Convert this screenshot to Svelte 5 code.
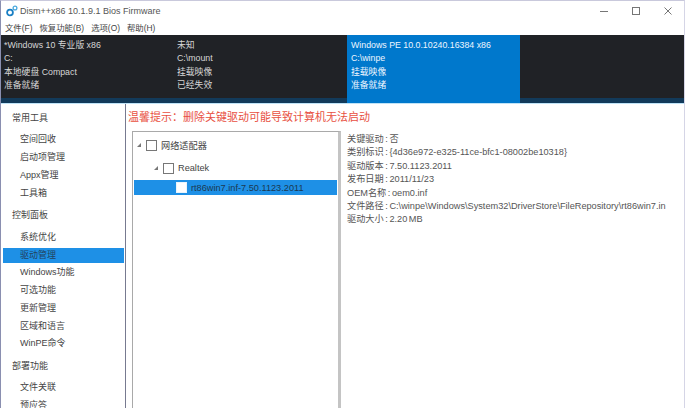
<script lang="ts">
  const menus = ["文件(F)", "恢复功能(B)", "选项(O)", "帮助(H)"];
  const sessions = [
    { lines: ["*Windows 10 专业版 x86", "C:", "本地硬盘 Compact", "准备就绪"], width: 173 },
    { lines: ["未知", "C:\\mount", "挂载映像", "已经失效"], width: 173 },
    { lines: ["Windows PE 10.0.10240.16384 x86", "C:\\winpe", "挂载映像", "准备就绪"], width: 173, active: true },
  ];
  const nav = [
    { title: "常用工具", items: ["空间回收", "启动项管理", "Appx管理", "工具箱"] },
    { title: "控制面板", items: ["系统优化", "驱动管理", "Windows功能", "可选功能", "更新管理", "区域和语言", "WinPE命令"] },
    { title: "部署功能", items: ["文件关联", "预应答"] },
  ];
  const details = [
    "关键驱动 : 否",
    "类别标识 : {4d36e972-e325-11ce-bfc1-08002be10318}",
    "驱动版本 : 7.50.1123.2011",
    "发布日期 : 2011/11/23",
    "OEM名称 : oem0.inf",
    "文件路径 : C:\\winpe\\Windows\\System32\\DriverStore\\FileRepository\\rt86win7.in",
    "驱动大小 : 2.20 MB",
  ];
</script>

<div class="window">
  <header class="titlebar">
    <svg class="logo" width="12" height="12" viewBox="0 0 12 12">
      <circle cx="4" cy="7.5" r="2.9" fill="none" stroke="#1a7fc4" stroke-width="1.8" />
      <circle cx="9" cy="3" r="1.9" fill="none" stroke="#4aa8dc" stroke-width="1.3" />
    </svg>
    <span class="title">Dism++x86 10.1.9.1 Bios Firmware</span>
    <div class="controls">
      <svg width="8" height="8" viewBox="0 0 8 8"><path d="M0 4.5h8" stroke="#555" /></svg>
      <svg width="8" height="8" viewBox="0 0 8 8"><rect x=".5" y=".5" width="7" height="7" fill="none" stroke="#555" /></svg>
      <svg width="8" height="8" viewBox="0 0 8 8"><path d="M.5.5l7 7M7.5.5l-7 7" stroke="#555" /></svg>
    </div>
  </header>

  <nav class="menubar">
    {#each menus as menu}
      <span>{menu}</span>
    {/each}
  </nav>

  <section class="sessions">
    {#each sessions as session}
      <div class="session" class:active={session.active} style="width: {session.width}px">
        {#each session.lines as line}
          <div>{line}</div>
        {/each}
      </div>
    {/each}
  </section>

  <main class="content">
    <aside class="sidebar">
      {#each nav as group}
        <h3>{group.title}</h3>
        {#each group.items as item}
          <div class="nav-item" class:selected={item === "驱动管理"}>{item}</div>
        {/each}
      {/each}
    </aside>

    <section class="panel">
      <p class="warning">温馨提示：删除关键驱动可能导致计算机无法启动</p>
      <div class="columns">
        <div class="tree">
          <div class="node level-0">
            <span class="arrow"></span><span class="check"></span><span>网络适配器</span>
          </div>
          <div class="node level-1">
            <span class="arrow"></span><span class="check"></span><span>Realtek</span>
          </div>
          <div class="node level-2 selected">
            <span class="check filled"></span><span>rt86win7.inf-7.50.1123.2011</span>
          </div>
        </div>
        <div class="details">
          {#each details as line}
            <div>{line}</div>
          {/each}
        </div>
      </div>
    </section>
  </main>
</div>

<style>
  :global(body) {
    margin: 0;
    overflow: hidden;
  }

  .window {
    width: 685px;
    height: 408px;
    overflow: hidden;
    display: flex;
    flex-direction: column;
    background: #fff;
    color: #333;
    font-family: "Liberation Sans", "Noto Sans CJK SC", sans-serif;
    font-size: 9px;
    box-sizing: border-box;
    border-left: 1px solid #8a8fb0;
    border-right: 1px solid #d5d5e6;
    border-top: 1px solid #c9c9dc;
  }

  .titlebar {
    height: 20px;
    display: flex;
    align-items: center;
    padding-left: 5px;
    gap: 2px;
    color: #555;
    flex: none;
  }

  .title {
    font-family: "Liberation Sans", sans-serif;
    font-size: 9px;
  }

  .controls {
    margin-left: auto;
    display: flex;
    gap: 24px;
    padding-right: 12px;
    opacity: 0.8;
  }

  .menubar {
    height: 14px;
    padding: 0 0 2px 4px;
    box-sizing: border-box;
    display: flex;
    align-items: center;
    gap: 7px;
    color: #444;
    font-size: 8.4px;
    flex: none;
  }

  .sessions {
    height: 68px;
    background: linear-gradient(#202226 0 63px, #123a5a 63px);
    display: flex;
    flex: none;
  }

  .session {
    color: #d6d6d6;
    padding: 4px 0 0 3px;
    box-sizing: border-box;
    font-size: 8.8px;
    line-height: 13.4px;
    flex: none;
  }

  .session.active {
    background: #0078cc;
    color: #eef6ff;
    padding-left: 4px;
  }

  .content {
    flex: 1;
    display: flex;
    min-height: 0;
    border-top: 1px solid #bfe3f7;
  }

  .sidebar {
    width: 125px;
    flex: none;
    padding: 1px 1px 0 2px;
    box-sizing: border-box;
    border-right: 1px solid #777a90;
    color: #444;
  }

  h3 {
    margin: 0;
    padding-left: 9px;
    font-weight: normal;
    font-size: 9px;
    line-height: 26.2px;
    height: 26.2px;
  }

  .nav-item {
    height: 17.8px;
    line-height: 17.8px;
    padding-left: 17px;
    font-size: 9px;
  }

  .nav-item.selected {
    background: #1e90e6;
    color: #23435e;
    height: 15px;
    line-height: 15px;
    margin: 1.4px 0;
  }

  .panel {
    flex: 1;
    min-width: 0;
    padding: 4px 0 0 2px;
  }

  .warning {
    margin: 0;
    color: #e8503f;
    font-size: 11px;
    line-height: 18px;
    white-space: nowrap;
  }

  .columns {
    display: flex;
    margin-top: 5px;
  }

  .tree {
    width: 209px;
    height: 290px;
    flex: none;
    margin-left: 4px;
    border: 1px solid #a9a9a9;
    border-right: 3px solid #c4c4c4;
    padding-top: 3px;
    box-sizing: border-box;
    color: #444;
  }

  .node {
    display: flex;
    align-items: center;
    gap: 4px;
    height: 20px;
    margin: 0 1px 3px;
    font-size: 9.2px;
  }

  .node.level-0 {
    padding-left: 3px;
  }

  .node.level-1 {
    padding-left: 20px;
  }

  .node.level-2 {
    padding-left: 42px;
    height: 15px;
    margin-top: -1px;
  }

  .node.selected {
    background: #1e90e6;
    color: #1c3850;
  }

  .arrow {
    width: 0;
    height: 0;
    border-left: 4px solid transparent;
    border-bottom: 4px solid #777;
    margin-right: 1px;
  }

  .check {
    width: 9px;
    height: 9px;
    border: 1px solid #777;
    background: #fff;
    flex: none;
  }

  .check.filled {
    border-color: #eaf4fc;
  }

  .details {
    padding: 0 0 0 6px;
    margin-top: 2px;
    line-height: 13.4px;
    font-size: 9.2px;
    word-spacing: -1px;
    color: #555;
    white-space: nowrap;
  }
</style>
